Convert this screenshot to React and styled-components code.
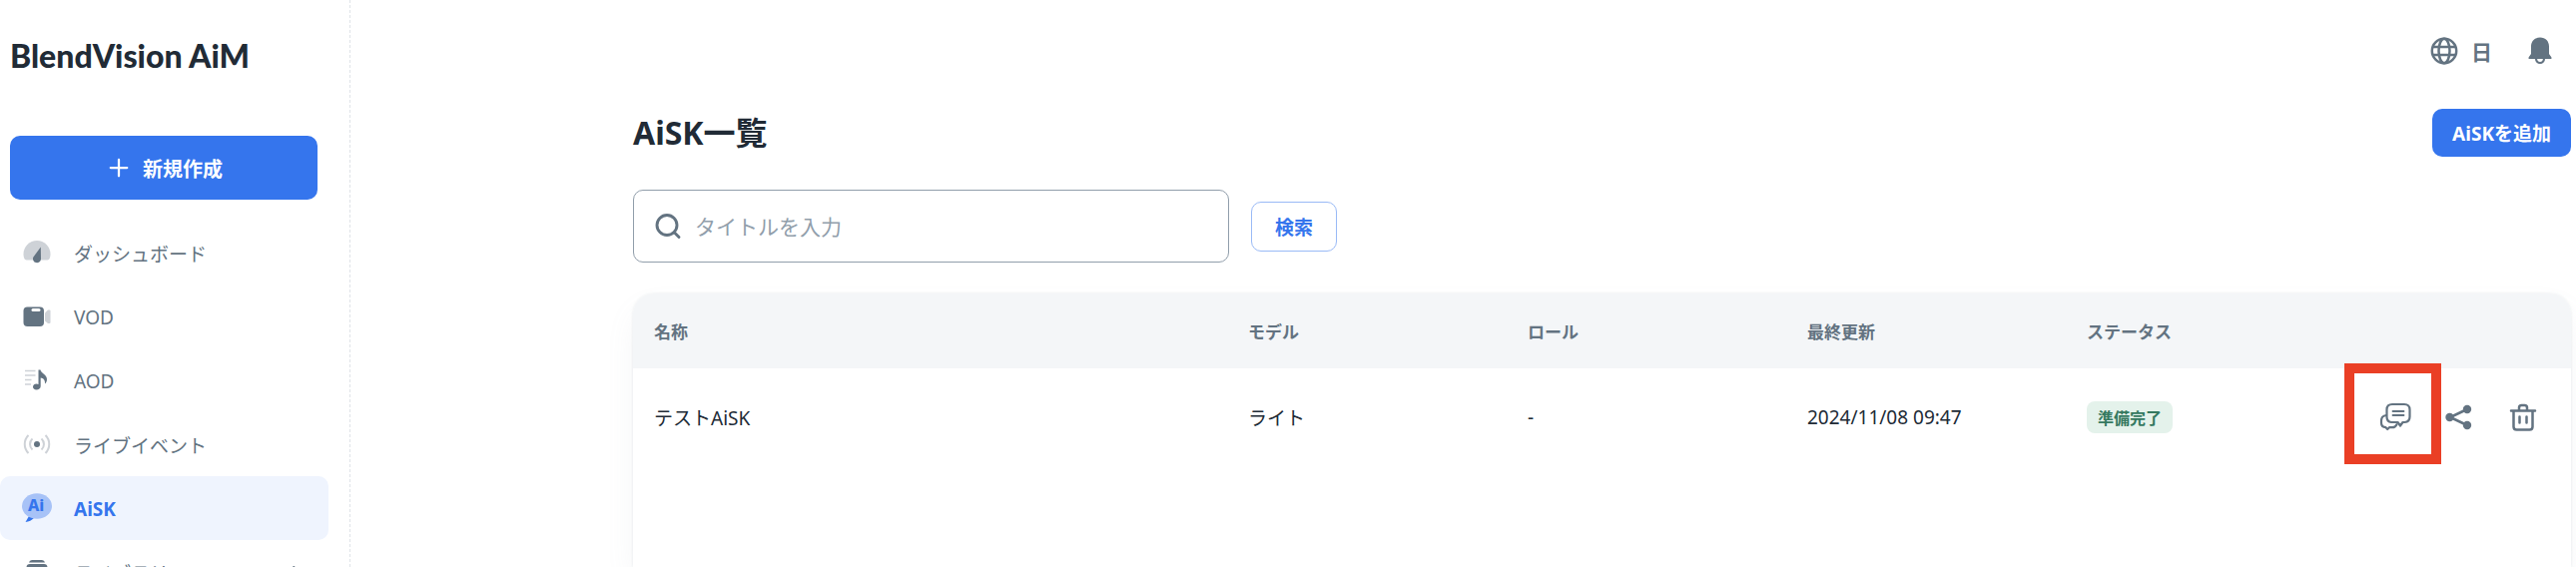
import React, { useState } from 'react';
import styled, { createGlobalStyle } from 'styled-components';

const GlobalStyle = createGlobalStyle`
    *, *::before, *::after {
        box-sizing: border-box;
    }
    body {
        margin: 0;
        background: #fff;
        color: #212b36;
        font-family: "Noto Sans", "Noto Sans CJK JP", sans-serif;
        font-size: 19px;
    }
    button, input {
        font-family: inherit;
    }
`

const Shell = styled.div`
    display: flex;
    height: 100vh;
    overflow: hidden;
`
const Sidebar = styled.aside`
    flex: 0 0 351px;
    border-right: 1px dashed #dfe3e8;
`
const Logo = styled.a`
    display: flex;
    align-items: center;
    height: 110px;
    padding-left: 10px;
    margin-bottom: 26px;
    color: #212b36;
    font-family: Lato, sans-serif;
    font-size: 32px;
    font-weight: 900;
    text-decoration: none;
`
const CreateButton = styled.button`
    display: flex;
    align-items: center;
    justify-content: center;
    gap: 12px;
    width: 308px;
    height: 64px;
    padding: 0 4px 0 6px;
    margin: 0 0 21px 10px;
    border: 0;
    border-radius: 10px;
    background: #3575ed;
    color: #fff;
    font-size: 20px;
    font-weight: 700;
`
const NavItem = styled.a`
    display: flex;
    align-items: center;
    gap: 21px;
    width: 329px;
    height: 64px;
    padding: 2px 21px 0;
    border-radius: 10px;
    background: ${({ $active }) => ($active ? '#eff4fe' : 'transparent')};
    color: ${({ $active }) => ($active ? '#3575ed' : '#637381')};
    font-weight: ${({ $active }) => ($active ? 700 : 400)};
    text-decoration: none;
    svg {
        flex: none;
    }
`
const NavLabel = styled.span`
    flex: 1;
`
const Main = styled.main`
    flex: 1;
    display: flex;
    flex-direction: column;
    min-width: 0;
    padding: 0 5px 0 283px;
`
const TopBar = styled.header`
    display: flex;
    align-items: center;
    justify-content: flex-end;
    gap: 32px;
    height: 101px;
    padding-right: 15px;
    margin-bottom: 8px;
`
const TopButton = styled.button`
    display: flex;
    align-items: center;
    gap: 11px;
    padding: 0;
    border: 0;
    background: none;
    color: #637381;
    font-size: 21px;
    font-weight: 700;
`
const TitleRow = styled.div`
    display: flex;
    align-items: center;
    justify-content: space-between;
    height: 48px;
    margin-bottom: 33px;
`
const Title = styled.h1`
    margin: 0;
    font-size: 32px;
    font-weight: 700;
    line-height: 48px;
`
const AddButton = styled.button`
    height: 48px;
    padding: 0 20px;
    border: 0;
    border-radius: 10px;
    background: #3575ed;
    color: #fff;
    font-size: 19px;
    font-weight: 700;
`
const SearchRow = styled.form`
    display: flex;
    align-items: center;
    gap: 22px;
    margin-bottom: 31px;
`
const SearchBox = styled.label`
    display: flex;
    align-items: center;
    gap: 11px;
    width: 597px;
    height: 73px;
    padding: 0 18px;
    border: 1px solid #919eab;
    border-radius: 10px;
    color: #637381;
`
const SearchInput = styled.input`
    flex: 1;
    min-width: 0;
    padding: 0;
    border: 0;
    outline: 0;
    background: none;
    color: #212b36;
    font-size: 21px;
    &::placeholder {
        color: #919eab;
        opacity: 1;
    }
`
const SearchButton = styled.button`
    height: 50px;
    padding: 0 23px;
    border: 1px solid #9abaf6;
    border-radius: 10px;
    background: #fff;
    color: #3575ed;
    font-size: 19px;
    font-weight: 700;
`
const Card = styled.section`
    flex: 1;
    border-radius: 21px 21px 0 0;
    box-shadow: 0 0 3px rgba(145, 158, 171, 0.2), 0 16px 32px -5px rgba(145, 158, 171, 0.12);
`
const Table = styled.table`
    width: 100%;
    table-layout: fixed;
    border-collapse: separate;
    border-spacing: 0;
`
const Th = styled.th`
    width: ${({ $width }) => $width || 'auto'};
    height: 75px;
    padding: 0 21px;
    background: #f4f6f8;
    color: #637381;
    font-size: 17px;
    font-weight: 700;
    text-align: left;
    &:first-child {
        border-top-left-radius: 21px;
    }
    &:last-child {
        border-top-right-radius: 21px;
    }
`
const Td = styled.td`
    height: 97px;
    padding: 0 21px;
`
const Status = styled.span`
    display: inline-flex;
    align-items: center;
    height: 32px;
    padding: 0 11px;
    border-radius: 8px;
    background: #e4f2eb;
    color: #357960;
    font-size: 16px;
    font-weight: 700;
`
const Actions = styled.div`
    display: flex;
    justify-content: flex-end;
    gap: 32px;
    padding-right: 11px;
`
const IconButton = styled.button`
    position: relative;
    display: flex;
    padding: 0;
    border: 0;
    background: none;
    color: #637381;
`
/* red frame that points at the chat button */
const Highlight = styled.span`
    position: absolute;
    top: -38px;
    left: -35px;
    width: 97px;
    height: 101px;
    border: 10px solid #ea3f25;
    pointer-events: none;
`

const Icon = ({ size = 32, children }) => (
    <svg width={size} height={size} viewBox="0 0 32 32" fill="none" aria-hidden="true">
        {children}
    </svg>
)

const DashboardIcon = () => (
    <Icon>
        <path d="M5.500 22.500C3.500 22.500 2.500 19.500 2.500 16.500a13.500 13.500 0 0 1 27 0C29.500 19.500 28.500 22.500 26.500 22.500Z" fill="#ced2d7" />
        <path d="M19.800 9.500 20 21.500a4 4 0 1 1-7.600-2Z" fill="#637381" />
    </Icon>
)
const VodIcon = () => (
    <Icon>
        <path d="M24 11.500 27 8.500h1.500q1 0 1 1V21q0 1-1 1H27l-3-2.500Z" fill="#ced2d7" />
        <rect x="2.500" y="5.500" width="20.500" height="19.500" rx="4" fill="#637381" />
        <rect x="10.500" y="7" width="9" height="3" rx="1.500" fill="#fff" />
    </Icon>
)
const AodIcon = () => (
    <Icon>
        <path d="M4 5.500h10.500M4 10h10.500M4 14.500h6.500M4 19h6" stroke="#ced2d7" strokeWidth="1.700" />
        <path d="M17.500 4.500h2c.5 3.500 6.500 4.500 6.500 9.500 0 2-1 3.500-2 4.500.3-4-1.500-5.500-4.300-6V21c0 2-2 3.500-4.200 3.500S12 23.300 12 21.600s1.700-3 3.500-3c.8 0 1.500.2 2 .5Z" fill="#637381" />
    </Icon>
)
const LiveIcon = () => (
    <Icon>
        <circle cx="16" cy="15" r="3" fill="#637381" />
        <path d="M11.500 9.500c-3.300 3-3.300 8 0 11M20.500 9.500c3.300 3 3.300 8 0 11M7.500 6c-5 5-5 13 0 18M24.500 6c5 5 5 13 0 18" stroke="#ced2d7" strokeWidth="2" />
    </Icon>
)
const AiskIcon = () => (
    <Icon>
        <path d="M8 23 4.500 29q5-.3 9-4.500Z" fill="#3575ed" />
        <ellipse cx="16" cy="13" rx="15" ry="12.800" fill="#a7c2f7" />
        <text x="7" y="18" fill="#3575ed" fontSize="16" fontWeight="800">Ai</text>
    </Icon>
)
const LibraryIcon = () => (
    <Icon>
        <path d="M8 5.500q.5-2.500 3-2.500h10q2.500 0 3 2.500ZM5.500 10.500q0-3.500 3.500-3.500h14q3.500 0 3.500 3.500Z" fill="#637381" />
        <rect x="3" y="12" width="26" height="15" rx="4" fill="#637381" />
    </Icon>
)
const PlusIcon = () => (
    <Icon size={24}>
        <path d="M16 5v22M5 16h22" stroke="currentColor" strokeWidth="3" strokeLinecap="round" />
    </Icon>
)
const ChevronIcon = () => (
    <Icon size={21}>
        <path d="m11 6 9 9-9 9" stroke="currentColor" strokeWidth="3" strokeLinecap="round" strokeLinejoin="round" />
    </Icon>
)
const GlobeIcon = () => (
    <Icon>
        <g stroke="currentColor" strokeWidth="2.500">
            <circle cx="16" cy="16" r="12.200" />
            <ellipse cx="16" cy="16" rx="5.500" ry="12.200" />
            <path d="M4.500 12h23M4.500 20h23" />
        </g>
    </Icon>
)
const BellIcon = () => (
    <Icon>
        <path d="M16 2.500c-5.500 0-9 3.800-9 9V19l-2.300 3.200Q4 24 5.500 24h21q1.500 0 .8-1.800L25 19v-7.500c0-5.200-3.500-9-9-9Z" fill="currentColor" />
        <path d="M12 23.500a4 4.500 0 0 0 8 0" stroke="currentColor" strokeWidth="2.200" />
    </Icon>
)
const SearchIcon = () => (
    <Icon>
        <g stroke="currentColor" strokeWidth="2.900" strokeLinecap="round">
            <circle cx="15" cy="14.500" r="10" />
            <path d="m22.500 22 4.500 4.500" />
        </g>
    </Icon>
)
const ChatIcon = () => (
    <Icon>
        <g stroke="currentColor" strokeWidth="2.200" strokeLinejoin="round" strokeLinecap="round">
            <path d="M13 3h12q5.500 0 5.500 5.500v7q0 5-5 5.500h-2L21 24.500 18.500 21H12q-4.500-.5-4.500-5.500v-7Q7.500 3 13 3Z" />
            <path d="M7 14c-3 .3-5 2-5 5.500v2c0 3 2 4.500 4.500 4.700L8.200 28l1.800-1.800h3c2 0 3.500-1 4.500-3" />
            <path d="M13.500 10h11M13.500 14h11" strokeWidth="1.800" />
        </g>
    </Icon>
)
const ShareIcon = () => (
    <Icon>
        <path d="M24 8 7 16l17 8" stroke="currentColor" strokeWidth="2.600" />
        <circle cx="24" cy="8" r="4.200" fill="currentColor" />
        <circle cx="6.500" cy="16" r="4.200" fill="currentColor" />
        <circle cx="24" cy="24" r="4.200" fill="currentColor" />
    </Icon>
)
const TrashIcon = () => (
    <Icon>
        <g stroke="currentColor" strokeWidth="2.500" strokeLinecap="round">
            <path d="M4 9.500h24M12 9V6.500q0-2.500 2.500-2.500h3Q20 4 20 6.500V9M6.500 10v15.500q0 3 3 3h13q3 0 3-3V10M12.500 15.500v6M19.500 15.500v6" />
        </g>
    </Icon>
)

const NAV = [
    { label: 'ダッシュボード', icon: DashboardIcon },
    { label: 'VOD', icon: VodIcon },
    { label: 'AOD', icon: AodIcon },
    { label: 'ライブイベント', icon: LiveIcon },
    { label: 'AiSK', icon: AiskIcon, active: true },
    { label: 'ライブラリ', icon: LibraryIcon, more: true },
]

const COLUMNS = [
    { label: '名称' },
    { label: 'モデル', width: '280px' },
    { label: 'ロール', width: '280px' },
    { label: '最終更新', width: '280px' },
    { label: 'ステータス', width: '280px' },
    { label: '', width: '226px' },
]

const ROWS = [
    { name: 'テストAiSK', model: 'ライト', role: '-', updated: '2024/11/08 09:47', status: '準備完了' },
]

export default function App() {
    const [keyword, setKeyword] = useState('');

    return (
        <>
            <GlobalStyle />
            <Shell>
                <Sidebar>
                    <Logo href="#">BlendVision AiM</Logo>
                    <CreateButton type="button">
                        <PlusIcon />
                        新規作成
                    </CreateButton>
                    <nav>
                        {NAV.map(({ label, icon: NavIcon, active, more }) => (
                            <NavItem key={label} href="#" $active={active}>
                                <NavIcon />
                                <NavLabel>{label}</NavLabel>
                                {more && <ChevronIcon />}
                            </NavItem>
                        ))}
                    </nav>
                </Sidebar>
                <Main>
                    <TopBar>
                        <TopButton type="button" aria-label="言語">
                            <GlobeIcon />
                            日
                        </TopButton>
                        <TopButton type="button" aria-label="通知">
                            <BellIcon />
                        </TopButton>
                    </TopBar>
                    <TitleRow>
                        <Title>AiSK一覧</Title>
                        <AddButton type="button">AiSKを追加</AddButton>
                    </TitleRow>
                    <SearchRow onSubmit={(e) => e.preventDefault()}>
                        <SearchBox>
                            <SearchIcon />
                            <SearchInput
                                type="text"
                                aria-label="タイトル"
                                placeholder="タイトルを入力"
                                value={keyword}
                                onChange={(e) => setKeyword(e.target.value)}
                            />
                        </SearchBox>
                        <SearchButton type="submit">検索</SearchButton>
                    </SearchRow>
                    <Card>
                        <Table>
                            <thead>
                                <tr>
                                    {COLUMNS.map(({ label, width }) => (
                                        <Th key={label} $width={width}>{label}</Th>
                                    ))}
                                </tr>
                            </thead>
                            <tbody>
                                {ROWS.map((row) => (
                                    <tr key={row.name}>
                                        <Td>{row.name}</Td>
                                        <Td>{row.model}</Td>
                                        <Td>{row.role}</Td>
                                        <Td>{row.updated}</Td>
                                        <Td><Status>{row.status}</Status></Td>
                                        <Td>
                                            <Actions>
                                                <IconButton type="button" aria-label="チャット">
                                                    <ChatIcon />
                                                    <Highlight />
                                                </IconButton>
                                                <IconButton type="button" aria-label="共有">
                                                    <ShareIcon />
                                                </IconButton>
                                                <IconButton type="button" aria-label="削除">
                                                    <TrashIcon />
                                                </IconButton>
                                            </Actions>
                                        </Td>
                                    </tr>
                                ))}
                            </tbody>
                        </Table>
                    </Card>
                </Main>
            </Shell>
        </>
    );
}
